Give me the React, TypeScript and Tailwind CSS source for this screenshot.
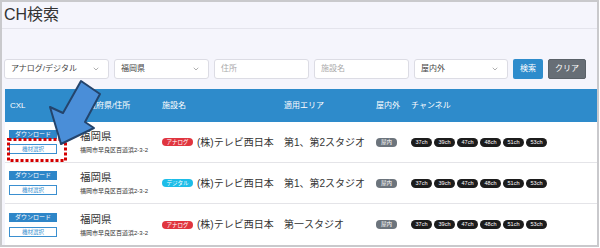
import { ChevronDown } from "lucide-react";

const rows = [
  { kind: "アナログ", area: "第1、第2スタジオ" },
  { kind: "デジタル", area: "第1、第2スタジオ" },
  { kind: "アナログ", area: "第一スタジオ" },
];

const channels = ["37ch", "39ch", "47ch", "48ch", "51ch", "53ch"];

const cols = "grid grid-cols-[70px_82px_122px_92px_35px_1fr]";

function Select({ label, width }: { label: string; width: string }) {
  return (
    <div
      className={`${width} h-[20px] bg-white border border-[#dcdce4] rounded-[3px] flex items-center justify-between pl-[6px] pr-[8px] text-[8px] text-[#444]`}
    >
      <span>{label}</span>
      <ChevronDown size={8} strokeWidth={1.4} className="text-[#555]" />
    </div>
  );
}

function Input({ placeholder, width }: { placeholder: string; width: string }) {
  return (
    <div
      className={`${width} h-[20px] bg-white border border-[#dcdce4] rounded-[3px] flex items-center pl-[6px] text-[8px] text-[#aaa]`}
    >
      {placeholder}
    </div>
  );
}

export default function App() {
  return (
    <div className="relative w-[600px] h-[248px] bg-white font-['Liberation_Sans','Noto_Sans_CJK_JP',sans-serif]">
      <div className="w-[599px] h-[247px] border-2 border-[#c9c9cc] bg-[#f5f5fc] flex flex-col">
        <div className="h-[28px] border-b border-[#e4e4ec] pl-[2px] pt-[2px] text-[16px] leading-[22px] text-[#333]">
          CH検索
        </div>

        <div className="mt-[30px] flex items-center gap-[5px] pl-[2px]">
          <Select label="アナログ/デジタル" width="w-[105px]" />
          <Select label="福岡県" width="w-[95px]" />
          <Input placeholder="住所" width="w-[95px]" />
          <Input placeholder="施設名" width="w-[95px]" />
          <Select label="屋内外" width="w-[94px]" />
          <button className="w-[30px] h-[20px] bg-[#2e8ccc] text-white text-[8px] rounded-[2px]">
            検索
          </button>
          <button className="w-[38px] h-[20px] bg-[#676e76] border border-[#5a6168] text-white text-[8px] rounded-[2px]">
            クリア
          </button>
        </div>

        <div className="mt-[10px] ml-[3px]">
          <div className={`${cols} h-[33px] items-center bg-[#2e8bcb] text-white text-[8px]`}>
            <div className="px-[5px]">CXL</div>
            <div className="px-[5px]">都道府県/住所</div>
            <div className="px-[5px]">施設名</div>
            <div className="px-[5px]">適用エリア</div>
            <div className="px-[5px]">屋内外</div>
            <div className="px-[5px]">チャンネル</div>
          </div>

          {rows.map((r, i) => (
            <div
              key={i}
              className={`${cols} h-[41px] items-center bg-white text-[#333] ${i < 2 ? "border-b border-[#e4e4e8]" : ""}`}
            >
              <div className="px-[4px] flex flex-col gap-[5px]">
                <div className="w-[48px] h-[9px] bg-[#2e86c8] text-white text-[6px] leading-[9px] text-center">
                  ダウンロード
                </div>
                <div className="w-[48px] h-[10px] bg-white border border-[#3a8fd0] text-[#3a8fd0] text-[5.5px] leading-[8px] text-center">
                  機材選択
                </div>
              </div>
              <div className="px-[5px] flex flex-col">
                <div className="text-[10.5px] leading-[13px]">福岡県</div>
                <div className="mt-[3px] text-[6px] leading-[8px] whitespace-nowrap">
                  福岡市早良区百道浜2-3-2
                </div>
              </div>
              <div className="px-[5px] flex items-center gap-[4px]">
                <span
                  className={`w-[31px] h-[8px] rounded-full text-white text-[5.5px] leading-[8px] text-center ${
                    r.kind === "アナログ" ? "bg-[#e0353f]" : "bg-[#1cbde8]"
                  }`}
                >
                  {r.kind}
                </span>
                <span className="text-[10px] whitespace-nowrap">(株)テレビ西日本</span>
              </div>
              <div className="px-[5px] text-[10px] whitespace-nowrap">{r.area}</div>
              <div className="px-[5px]">
                <span className="block w-[21px] h-[9px] rounded-[4px] bg-[#6c747c] text-white text-[5.5px] leading-[9px] text-center">
                  屋内
                </span>
              </div>
              <div className="px-[5px] flex gap-[2px]">
                {channels.map((c) => (
                  <span
                    key={c}
                    className="w-[21px] h-[9px] rounded-full bg-[#1c1c1c] text-white text-[5.5px] leading-[9px] text-center"
                  >
                    {c}
                  </span>
                ))}
              </div>
            </div>
          ))}
        </div>
      </div>

      <svg
        className="absolute top-0 left-0 pointer-events-none"
        width="600"
        height="248"
        viewBox="0 0 600 248"
      >
        <rect
          x="8.5"
          y="139.5"
          width="57"
          height="21"
          fill="none"
          stroke="#d40000"
          strokeWidth="3"
          strokeDasharray="3 2"
        />
        <polygon
          points="81,81 100,94 85,122 94,128 61,144 50,107 63,113"
          fill="#4a8ed8"
          stroke="#24446c"
          strokeWidth="2"
          strokeLinejoin="round"
        />
      </svg>
    </div>
  );
}
